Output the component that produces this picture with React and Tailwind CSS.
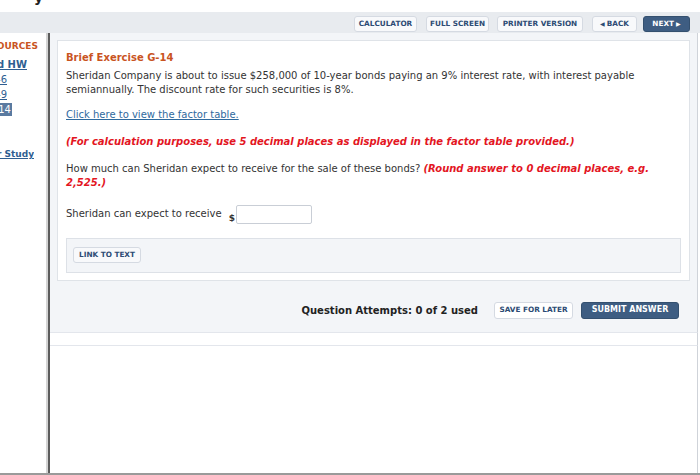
import { useState } from 'react';

const FONT = { fontFamily: '"DejaVu Sans", Verdana, sans-serif' };

function ToolButton({ children, dark, w = 'px-[5px]', className = '' }) {
  return (
    <button
      className={
        'h-[16px] rounded-[3px] border text-[7.3px] font-bold leading-none flex items-center justify-center whitespace-nowrap ' +
        w + ' ' + className + ' ' +
        (dark
          ? 'bg-[#3e5d82] border-[#34506f] text-white'
          : 'bg-[#f8f9fb] border-[#d5dae2] text-[#2d4b74]')
      }
    >
      {children}
    </button>
  );
}

function SideItem({ width, children, active, link, bold = true, orange, size = 'text-[10px]' }) {
  return (
    <div className="flex overflow-hidden justify-end whitespace-nowrap" style={{ width }}>
      <span
        className={
          size + ' leading-[13px] ' +
          (bold ? 'font-bold ' : '') +
          (orange ? 'text-[#c9541f] ' : '') +
          (link ? 'underline text-[#2f5e91] ' : '') +
          (active ? 'bg-[#5a7aa0] text-white no-underline px-[1px] ' : '')
        }
      >
        {children}
      </span>
    </div>
  );
}

export default function App() {
  const [amount, setAmount] = useState('');

  return (
    <div className="w-[700px] h-[475px] bg-white flex flex-col overflow-hidden text-[#333]" style={FONT}>
      {/* clipped strip from the page above */}
      <div className="h-[12px] bg-white relative overflow-hidden">
        <span className="absolute left-[34px] -top-[13px] text-[14px] font-bold text-[#222]">y</span>
      </div>

      {/* toolbar */}
      <div className="h-[21px] bg-[#e8ebef] flex items-start justify-end pr-[10px] pt-[4px]">
        <ToolButton w="w-[63px]">CALCULATOR</ToolButton>
        <ToolButton w="w-[63px]" className="ml-[9px]">FULL SCREEN</ToolButton>
        <ToolButton w="w-[86px]" className="ml-[8px]">PRINTER VERSION</ToolButton>
        <ToolButton w="w-[45px]" className="ml-[9px]">
          <span className="text-[6px] mr-[2px]">◀</span>BACK
        </ToolButton>
        <ToolButton dark w="w-[47px]" className="ml-[6px]">
          NEXT<span className="text-[6px] ml-[2px]">▶</span>
        </ToolButton>
      </div>

      <div className="flex flex-1 min-h-0">
        {/* left resources column, clipped on the left */}
        <div className="w-[46px] flex flex-col pt-[7px] gap-[2px] shrink-0">
          <SideItem width={38} orange size="text-[9px]">RESOURCES</SideItem>
          <div className="h-[1px]" />
          <SideItem width={27} link>Assigned HW</SideItem>
          <SideItem width={7} link bold={false}>BE G-6</SideItem>
          <SideItem width={7} link bold={false}>BE G-9</SideItem>
          <SideItem width={12} active bold={false}>BE G-14</SideItem>
          <div className="h-[28px]" />
          <SideItem width={34} link size="text-[9px]">Tools for Study</SideItem>
        </div>
        <div className="w-[2px] bg-[#d4d4d4]" />
        <div className="w-[2px] bg-[#5c5c5c]" />

        {/* main */}
        <div className="flex-1 flex flex-col">
          <div className="bg-[#f3f5f8] px-[7px] pt-[7px] flex flex-col border-r border-[#cfd3d9]">
            <div className="bg-white border border-[#dfe3e8] px-[8px] pt-[10px] pb-[7px]">
              <div className="text-[10px] font-bold text-[#c9541f] leading-[14px]">Brief Exercise G-14</div>
              <p className="text-[10px] leading-[14px] mt-[4px]">
                Sheridan Company is about to issue $258,000 of 10-year bonds paying an 9% interest rate, with interest payable
                semiannually. The discount rate for such securities is 8%.
              </p>
              <p className="text-[10px] leading-[14px] mt-[11px]">
                <a className="text-[#2f6a9e] underline">Click here to view the factor table.</a>
              </p>
              <p className="text-[10px] leading-[14px] mt-[13px] font-bold italic text-[#e3161f]">
                (For calculation purposes, use 5 decimal places as displayed in the factor table provided.)
              </p>
              <p className="text-[10px] leading-[14px] mt-[13px]">
                How much can Sheridan expect to receive for the sale of these bonds?{' '}
                <span className="font-bold italic text-[#e3161f]">(Round answer to 0 decimal places, e.g. 2,525.)</span>
              </p>
              <div className="flex items-start mt-[15px] text-[10px]">
                <span className="mt-[1px]">Sheridan can expect to receive</span>
                <span className="ml-[7px] mt-[7px] text-[9px] font-bold">$</span>
                <input
                  value={amount}
                  onChange={(e) => setAmount(e.target.value)}
                  className="ml-[1px] w-[76px] h-[19px] border border-[#c9ced6] rounded-[2px] bg-white outline-none px-1 text-[10px]"
                />
              </div>
              <div className="mt-[12px] bg-[#f3f5f8] border border-[#dde1e7] h-[35px] flex items-center px-[6px]">
                <ToolButton w="w-[68px]">LINK TO TEXT</ToolButton>
              </div>
            </div>

            <div className="h-[51px] flex items-center justify-end pr-[11px] pt-[8px]">
              <span className="text-[10px] font-bold text-[#222]">Question Attempts: 0 of 2 used</span>
              <button className="ml-[16px] w-[79px] h-[17px] flex items-center justify-center leading-none bg-white border border-[#d5dae2] rounded-[3px] text-[7.3px] font-bold text-[#2d4b74]">
                SAVE FOR LATER
              </button>
              <button className="ml-[8px] w-[98px] h-[17px] flex items-center justify-center leading-none bg-[#3e5d82] border border-[#34506f] rounded-[3px] text-[8px] font-bold text-white">
                SUBMIT ANSWER
              </button>
            </div>
          </div>
          <div className="h-[14px] border-y border-[#e3e6ec] border-r border-r-[#cfd3d9] bg-white" />
          <div className="flex-1 border-r border-[#cfd3d9]" />
        </div>
        <div className="w-[2px]" />
      </div>
      <div className="h-[2px] bg-[#9a9a9a]" />
    </div>
  );
}
